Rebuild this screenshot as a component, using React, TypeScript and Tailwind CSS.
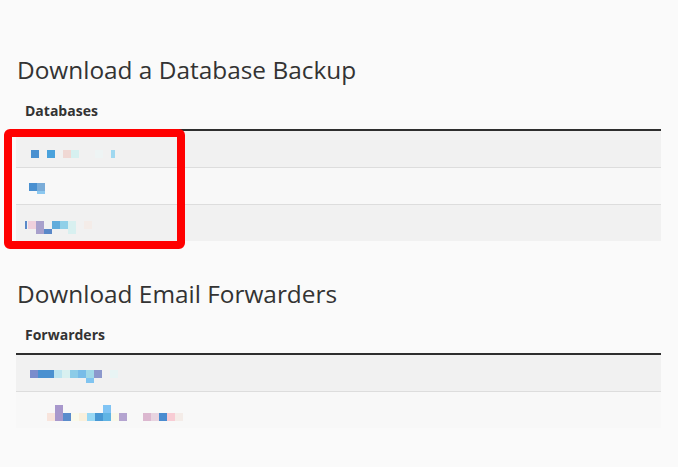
import React from "react";

type R = [number, number, number, number, string];

const Pix = ({ rects }: { rects: R[] }) => (
  <svg width="220" height="36" viewBox="0 0 220 36" className="block">
    {rects.map(([x, y, w, h, c], i) => (
      <rect key={i} x={x} y={y} width={w} height={h} fill={c} />
    ))}
  </svg>
);

const db1: R[] = [
  [15, 19, 8, 8, "#4a90d0"],
  [31, 19, 8, 8, "#4aa2dc"],
  [47, 19, 8, 8, "#f0d8d4"],
  [55, 19, 8, 8, "#d6f0f0"],
  [79, 19, 8, 8, "#eef4f4"],
  [95, 19, 4, 8, "#a0d8f0"],
];
const db2: R[] = [
  [13, 15, 8, 8, "#4a90d0"],
  [21, 15, 8, 8, "#7aacd8"],
  [21, 23, 8, 3, "#8cc8f0"],
];
const db3: R[] = [
  [9, 16, 2, 8, "#5a88c8"],
  [12, 16, 8, 8, "#f0d0dc"],
  [20, 16, 8, 13, "#a8a0cc"],
  [28, 24, 8, 5, "#5a88c8"],
  [36, 16, 8, 8, "#60acdc"],
  [44, 16, 8, 8, "#90d0e8"],
  [52, 16, 8, 13, "#d8f0f0"],
  [68, 16, 8, 8, "#f4ece8"],
];
const fw1: R[] = [
  [14, 15, 8, 8, "#7a8ccc"],
  [22, 15, 16, 8, "#4a90d0"],
  [38, 15, 8, 8, "#bce4f0"],
  [46, 15, 8, 8, "#d8f0f0"],
  [54, 15, 8, 8, "#8ccce8"],
  [62, 15, 8, 8, "#78bce8"],
  [70, 15, 8, 8, "#a0d8e8"],
  [70, 23, 8, 5, "#80c4f0"],
  [78, 15, 8, 8, "#8c98cc"],
  [94, 15, 8, 8, "#e8f4f4"],
];
const fw2: R[] = [
  [31, 21, 8, 8, "#f8e4dc"],
  [39, 13, 8, 16, "#a898cc"],
  [47, 21, 8, 8, "#5a8ccc"],
  [55, 21, 8, 8, "#fafaec"],
  [63, 21, 8, 8, "#faf0dc"],
  [71, 21, 8, 8, "#98d8f4"],
  [79, 21, 8, 8, "#4898d4"],
  [87, 13, 8, 8, "#80c4f4"],
  [87, 21, 8, 8, "#60b4e4"],
  [95, 21, 8, 8, "#f8f8ea"],
  [103, 21, 8, 8, "#b4a4d0"],
  [127, 21, 8, 8, "#dcb8d0"],
  [135, 21, 8, 8, "#e8d4e0"],
  [143, 21, 8, 8, "#4a8cd0"],
  [151, 21, 8, 8, "#f8ccd4"],
  [159, 21, 8, 8, "#f4ece8"],
];

const Section = ({
  title,
  label,
  rows,
  className,
}: {
  title: string;
  label: string;
  rows: R[][];
  className?: string;
}) => (
  <section className={className}>
    <h2 className="text-[24.4px] leading-[32px] font-normal text-[#333] pl-[1px]">{title}</h2>
    <div className="mt-[7px] w-[645px]">
      <div className="px-[9px] pt-[8px] pb-[8px] border-b-2 border-[#2e2e2e]">
        <div className="text-[14px] leading-[20px] font-bold text-[#333]">{label}</div>
      </div>
      {rows.map((r, i) => (
        <div
          key={i}
          className={
            (i % 2 === 0 ? "bg-[#f1f1f1] " : "bg-[#f8f8f8] ") +
            (i < rows.length - 1 ? "h-[37px] border-b border-[#dddddd]" : "h-[36px]")
          }
        >
          <Pix rects={r} />
        </div>
      ))}
    </div>
  </section>
);

export default function App() {
  return (
    <div
      className="relative w-[678px] h-[467px] bg-[#fafafa] pl-[16px] pt-[54px] overflow-hidden"
      style={{ fontFamily: '"Open Sans", "Noto Sans", sans-serif' }}
    >
      <Section title="Download a Database Backup" label="Databases" rows={[db1, db2, db3]} />
      <Section
        className="mt-[37px]"
        title="Download Email Forwarders"
        label="Forwarders"
        rows={[fw1, fw2]}
      />
      <div className="absolute left-[4px] top-[129px] w-[181px] h-[120px] border-[8px] border-[#ff0000] rounded-[6px] pointer-events-none" />
    </div>
  );
}
